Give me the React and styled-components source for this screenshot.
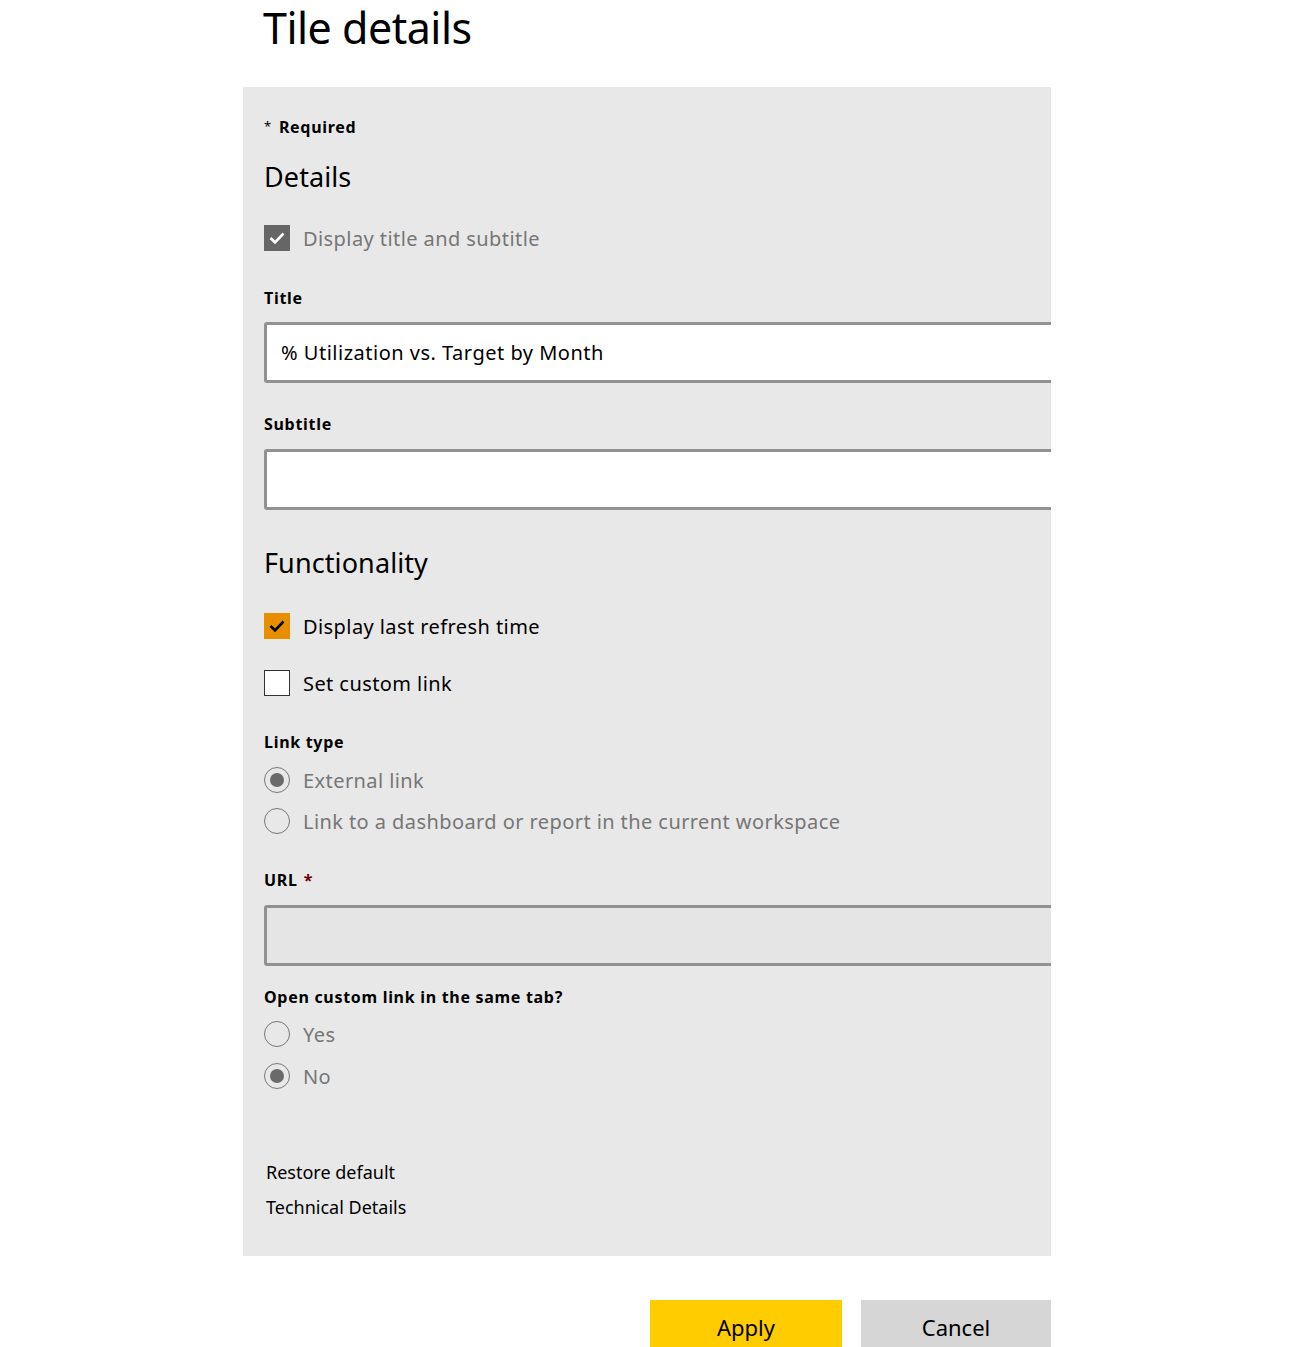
import React, { useState } from 'react';
import styled, { createGlobalStyle } from 'styled-components';

const GlobalStyle = createGlobalStyle`
    html, body {
        margin: 0;
        padding: 0;
        background: #ffffff;
        font-family: "Noto Sans", "Open Sans", sans-serif;
        color: #000000;
    }
`;

const Page = styled.div`
    width: 808px;
    margin-left: 243px;
    display: flex;
    flex-direction: column;
`;

const PageTitle = styled.h1`
    margin: 0;
    padding: 0 0 0 20px;
    height: 87px;
    font-size: 43px;
    font-weight: 400;
    line-height: 56px;
    letter-spacing: -0.5px;
`;

const Panel = styled.div`
    background: #e8e8e8;
    overflow: hidden;
    padding: 26px 0 0 21px;
    height: 1169px;
    box-sizing: border-box;
    display: flex;
    flex-direction: column;
`;

const Required = styled.div`
    font-size: 16px;
    font-weight: 700;
    line-height: 26px;
    letter-spacing: 0.7px;
    span {
        font-weight: 400;
        font-size: 13px;
        margin-right: 7px;
        vertical-align: 2px;
    }
`;

const SectionHeading = styled.h2`
    margin: ${(p) => p.$top}px 0 0 0;
    font-size: 27px;
    font-weight: 400;
    line-height: 36px;
    letter-spacing: 0.1px;
`;

const FieldLabel = styled.div`
    margin-top: ${(p) => p.$top}px;
    font-size: 16px;
    font-weight: 700;
    line-height: 24px;
    letter-spacing: 0.7px;
    span {
        color: #6b0000;
        margin-left: 6px;
    }
`;

const TextInput = styled.input`
    margin-top: ${(p) => p.$top}px;
    width: 820px;
    height: 61px;
    box-sizing: border-box;
    border: 3px solid #919191;
    border-radius: 3px;
    background: ${(p) => (p.disabled ? '#e5e5e5' : '#ffffff')};
    padding: 0 14px;
    font-family: inherit;
    font-size: 20px;
    letter-spacing: 0.5px;
    color: #000000;
    outline: none;
`;

const OptionRow = styled.label`
    margin-top: ${(p) => p.$top}px;
    display: flex;
    align-items: center;
    gap: 13px;
    height: 26px;
    font-size: 20px;
    letter-spacing: 0.42px;
    color: ${(p) => (p.$muted ? '#767676' : '#000000')};
    cursor: pointer;
`;

const Box = styled.span`
    width: 26px;
    height: 26px;
    box-sizing: border-box;
    flex-shrink: 0;
    display: flex;
    align-items: center;
    justify-content: center;
    background: ${(p) => p.$fill};
    border: ${(p) => (p.$outlined ? '1px solid #333333' : 'none')};
`;

const Radio = styled.span`
    width: 26px;
    height: 26px;
    box-sizing: border-box;
    flex-shrink: 0;
    border-radius: 50%;
    border: 1px solid #777777;
    display: flex;
    align-items: center;
    justify-content: center;
    &::after {
        content: '';
        width: 14px;
        height: 14px;
        border-radius: 50%;
        background: #6a6a6a;
        display: ${(p) => (p.$checked ? 'block' : 'none')};
    }
`;

const TextLink = styled.a`
    margin-top: ${(p) => p.$top}px;
    margin-left: 2px;
    font-size: 18px;
    line-height: 24px;
    letter-spacing: 0;
    color: #000000;
    text-decoration: none;
    cursor: pointer;
`;

const Footer = styled.div`
    display: flex;
    justify-content: flex-end;
    gap: 19px;
    margin-top: 44px;
`;

const Button = styled.button`
    width: ${(p) => p.$width}px;
    height: 47px;
    border: none;
    border-radius: 0;
    background: ${(p) => p.$bg};
    font-family: inherit;
    font-size: 22px;
    letter-spacing: 0;
    color: #000000;
    padding: 6px 0 0 0;
    cursor: pointer;
`;

const Check = ({ color }) => (
    <svg width="20" height="20" viewBox="0 0 20 20">
        <path d="M3.5 10 L8 14.3 L16.5 5.5" fill="none" stroke={color} strokeWidth="2.6" />
    </svg>
);

const CheckBox = ({ checked, fill, tick }) => (
    <Box $fill={checked ? fill : '#ffffff'} $outlined={!checked}>
        {checked && <Check color={tick} />}
    </Box>
);

const App = () => {
    const [title, setTitle] = useState('% Utilization vs. Target by Month');
    const [subtitle, setSubtitle] = useState('');

    return (
        <>
            <GlobalStyle />
            <Page>
                <PageTitle>Tile details</PageTitle>
                <Panel>
                    <Required><span>*</span>Required</Required>
                    <SectionHeading $top={19}>Details</SectionHeading>
                    <OptionRow $top={30} $muted>
                        <CheckBox checked fill="#666666" tick="#ffffff" />
                        Display title and subtitle
                    </OptionRow>
                    <FieldLabel $top={35}>Title</FieldLabel>
                    <TextInput $top={12} value={title} onChange={(e) => setTitle(e.target.value)} />
                    <FieldLabel $top={29}>Subtitle</FieldLabel>
                    <TextInput $top={13} value={subtitle} onChange={(e) => setSubtitle(e.target.value)} />
                    <SectionHeading $top={35}>Functionality</SectionHeading>
                    <OptionRow $top={32}>
                        <CheckBox checked fill="#e88f00" tick="#000000" />
                        Display last refresh time
                    </OptionRow>
                    <OptionRow $top={31}>
                        <CheckBox checked={false} />
                        Set custom link
                    </OptionRow>
                    <FieldLabel $top={34}>Link type</FieldLabel>
                    <OptionRow $top={13} $muted>
                        <Radio $checked />
                        External link
                    </OptionRow>
                    <OptionRow $top={15} $muted>
                        <Radio />
                        Link to a dashboard or report in the current workspace
                    </OptionRow>
                    <FieldLabel $top={34}>URL<span>*</span></FieldLabel>
                    <TextInput $top={13} disabled />
                    <FieldLabel $top={19}>Open custom link in the same tab?</FieldLabel>
                    <OptionRow $top={12} $muted>
                        <Radio />
                        Yes
                    </OptionRow>
                    <OptionRow $top={16} $muted>
                        <Radio $checked />
                        No
                    </OptionRow>
                    <TextLink $top={71}>Restore default</TextLink>
                    <TextLink $top={11}>Technical Details</TextLink>
                </Panel>
                <Footer>
                    <Button $width={192} $bg="#ffcc00">Apply</Button>
                    <Button $width={190} $bg="#d6d6d6">Cancel</Button>
                </Footer>
            </Page>
        </>
    );
};

export default App;
